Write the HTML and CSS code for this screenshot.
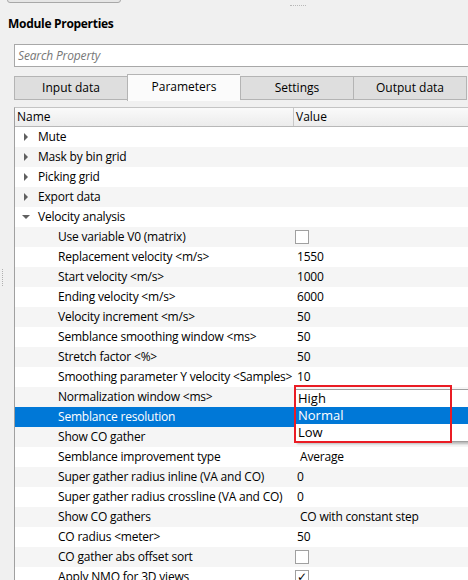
FILE: index.html
```html
<!DOCTYPE html>
<html>
<head>
<meta charset="utf-8">
<link rel="stylesheet" href="styles.css">
</head>
<body>
<div class="page">
  <div class="topbar">
    <div class="topbtn"></div>
    <div class="hdots"></div>
  </div>
  <div class="title">Module Properties</div>
  <div class="search"><span class="ph">Search Property</span></div>
  <div class="tabs">
    <div class="tab">Input data</div>
    <div class="tab active">Parameters</div>
    <div class="tab">Settings</div>
    <div class="tab">Output data</div>
  </div>
  <div class="main">
    <div class="vdots"></div>
    <div class="table">
      <div class="head"><div class="name">Name</div><div class="value">Value</div></div>
      <div class="row"><div class="name l0"><span class="arr r"></span>Mute</div><div class="value"></div></div>
      <div class="row alt"><div class="name l0"><span class="arr r"></span>Mask by bin grid</div><div class="value"></div></div>
      <div class="row"><div class="name l0"><span class="arr r"></span>Picking grid</div><div class="value"></div></div>
      <div class="row alt"><div class="name l0"><span class="arr r"></span>Export data</div><div class="value"></div></div>
      <div class="row"><div class="name l0"><span class="arr d"></span>Velocity analysis</div><div class="value"></div></div>
      <div class="row alt"><div class="name l1">Use variable V0 (matrix)</div><div class="value"><span class="cb"></span></div></div>
      <div class="row"><div class="name l1">Replacement velocity &lt;m/s&gt;</div><div class="value">1550</div></div>
      <div class="row alt"><div class="name l1">Start velocity &lt;m/s&gt;</div><div class="value">1000</div></div>
      <div class="row"><div class="name l1">Ending velocity &lt;m/s&gt;</div><div class="value">6000</div></div>
      <div class="row alt"><div class="name l1">Velocity increment &lt;m/s&gt;</div><div class="value">50</div></div>
      <div class="row"><div class="name l1">Semblance smoothing window &lt;ms&gt;</div><div class="value">50</div></div>
      <div class="row alt"><div class="name l1">Stretch factor &lt;%&gt;</div><div class="value">50</div></div>
      <div class="row"><div class="name l1">Smoothing parameter Y velocity &lt;Samples&gt;</div><div class="value">10</div></div>
      <div class="row alt"><div class="name l1">Normalization window &lt;ms&gt;</div><div class="value"></div></div>
      <div class="row sel"><div class="name l1">Semblance resolution</div><div class="value"></div></div>
      <div class="row alt"><div class="name l1">Show CO gather</div><div class="value"></div></div>
      <div class="row"><div class="name l1">Semblance improvement type</div><div class="value combo">Average</div></div>
      <div class="row alt"><div class="name l1">Super gather radius inline (VA and CO)</div><div class="value">0</div></div>
      <div class="row"><div class="name l1">Super gather radius crossline (VA and CO)</div><div class="value">0</div></div>
      <div class="row alt"><div class="name l1">Show CO gathers</div><div class="value combo">CO with constant step</div></div>
      <div class="row"><div class="name l1">CO radius &lt;meter&gt;</div><div class="value">50</div></div>
      <div class="row alt"><div class="name l1">CO gather abs offset sort</div><div class="value"><span class="cb"></span></div></div>
      <div class="row"><div class="name l1">Apply NMO for 3D views</div><div class="value"><span class="cb on">&#10003;</span></div></div>
    </div>
  </div>
  <div class="popup">
    <div class="opt">High</div>
    <div class="opt hl">Normal</div>
    <div class="opt">Low</div>
  </div>
  <div class="mark"></div>
</div>
</body>
</html>
```

FILE: styles.css
```css
html, body {
  margin: 0;
  padding: 0;
  background: #f0f0f0;
  overflow: hidden;
}
.page {
  position: relative;
  width: 468px;
  height: 580px;
  overflow: hidden;
  font-family: "Open Sans", "Noto Sans", sans-serif;
  font-size: 12px;
  color: #000;
}
.topbar {
  height: 2px;
  display: flex;
  position: relative;
}
.topbtn {
  width: 112px;
  height: 14px;
  margin-top: -13px;
  margin-left: 7px;
  border: 1px solid #a8a8a8;
  border-radius: 3px;
  background: #e6e6e6;
}
.hdots {
  position: absolute;
  left: 290px;
  top: 5px;
  width: 16px;
  border-top: 1px dotted #b8b8b8;
}
.title {
  margin: 11px 0 0 8px;
  height: 22px;
  line-height: 22px;
  font-weight: bold;
  letter-spacing: -0.3px;
}
.search {
  margin: 9px 0 0 14px;
  width: 460px;
  height: 21px;
  border: 1px solid #a8a8a8;
  background: #fff;
  box-sizing: content-box;
  line-height: 21px;
}
.ph {
  padding-left: 3px;
  font-style: italic;
  color: #777;
  letter-spacing: -0.15px;
}
.tabs {
  display: flex;
  margin: 7px 0 0 14px;
  height: 27px;
  align-items: flex-end;
}
.tab {
  width: 112px;
  height: 22px;
  line-height: 22px;
  margin-bottom: 1px;
  text-align: center;
  background: #dedede;
  border: 1px solid #b4b4b4;
  border-right: none;
}
.tab:last-child {
  border-right: 1px solid #b4b4b4;
}
.tab.active {
  height: 26px;
  line-height: 24px;
  margin-bottom: 0;
  background: #fbfbfb;
  border-bottom: none;
  width: 112px;
}
.tab.active + .tab {
  border-left: 1px solid #b4b4b4;
}
.main {
  position: relative;
  margin-top: 6px;
}
.vdots {
  position: absolute;
  left: 2px;
  top: 162px;
  height: 17px;
  border-left: 1px dotted #b0b0b0;
}
.table {
  margin-left: 14px;
  border-left: 1px solid #a0a0a0;
  border-top: 1px solid #c4c4c4;
  background: #fff;
}
.head {
  display: flex;
  height: 18px;
  line-height: 18px;
  background: linear-gradient(#fafafa, #ececec);
  border-bottom: 1px solid #b8b8b8;
}
.head .name {
  width: 276px;
  padding-left: 2px;
  border-right: 1px solid #c8c8c8;
}
.head .value {
  padding-left: 2px;
}
.row {
  display: flex;
  height: 20px;
  line-height: 20px;
  background: #fff;
  white-space: nowrap;
  letter-spacing: -0.2px;
}
.row.alt {
  background: #f5f5f5;
}
.row.sel {
  background: #0078d7;
  color: #fff;
}
.row .name {
  width: 279px;
  flex: none;
  box-sizing: border-box;
  position: relative;
}
.name.l0 {
  padding-left: 23px;
}
.name.l1 {
  padding-left: 43px;
}
.row .value {
  padding-left: 3px;
  position: relative;
}
.value.combo {
  padding-left: 6px;
}
.arr {
  position: absolute;
  width: 0;
  height: 0;
}
.arr.r {
  left: 9px;
  top: 6px;
  border-top: 4px solid transparent;
  border-bottom: 4px solid transparent;
  border-left: 4px solid #606060;
}
.arr.d {
  left: 7px;
  top: 8px;
  border-left: 4px solid transparent;
  border-right: 4px solid transparent;
  border-top: 4px solid #606060;
}
.cb {
  display: block;
  position: absolute;
  left: 1px;
  top: 3px;
  width: 12px;
  height: 12px;
  border: 1px solid #a0a0a0;
  background: #fff;
  line-height: 12px;
  text-align: center;
  font-size: 12px;
  font-family: "DejaVu Sans", sans-serif;
  font-weight: bold;
  color: #000;
  letter-spacing: 0;
}
.popup {
  position: absolute;
  left: 295px;
  top: 389px;
  width: 180px;
  background: #fff;
  border-top: 1px solid #a0a0a0;
  border-bottom: 1px solid #a0a0a0;
  border-left: 1px solid #d0d0d0;
  box-shadow: 2px 2px 2px rgba(0,0,0,0.25);
}
.opt {
  height: 17px;
  line-height: 17px;
  padding-left: 2px;
  font-size: 13px;
}
.opt.hl {
  background: #0078d7;
  color: #fff;
}
.mark {
  position: absolute;
  left: 294px;
  top: 385px;
  width: 154px;
  height: 54px;
  border: 2px solid #ea1c24;
}
```
